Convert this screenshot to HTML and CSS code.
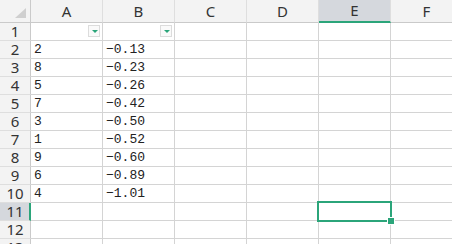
FILE: index.html
```html
<!DOCTYPE html>
<html lang="zh-CN">
<head>
    <meta charset="UTF-8">
    <title>Sheet1</title>
    <link rel="stylesheet" href="styles.css">
</head>
<body>
    <div class="sheet">
        <!-- 列标题 -->
        <div class="corner"><span class="corner-tri"></span></div>
        <div class="col-head">A</div>
        <div class="col-head">B</div>
        <div class="col-head">C</div>
        <div class="col-head">D</div>
        <div class="col-head active">E</div>
        <div class="col-head">F</div>

        <!-- 第1行 筛选 -->
        <div class="row-head">1</div>
        <div class="cell"><span class="filter"></span></div>
        <div class="cell"><span class="filter"></span></div>
        <div class="cell"></div><div class="cell"></div><div class="cell"></div><div class="cell"></div>

        <div class="row-head">2</div><div class="cell">2</div><div class="cell">−0.13</div>
        <div class="cell"></div><div class="cell"></div><div class="cell"></div><div class="cell"></div>

        <div class="row-head">3</div><div class="cell">8</div><div class="cell">−0.23</div>
        <div class="cell"></div><div class="cell"></div><div class="cell"></div><div class="cell"></div>

        <div class="row-head">4</div><div class="cell">5</div><div class="cell">−0.26</div>
        <div class="cell"></div><div class="cell"></div><div class="cell"></div><div class="cell"></div>

        <div class="row-head">5</div><div class="cell">7</div><div class="cell">−0.42</div>
        <div class="cell"></div><div class="cell"></div><div class="cell"></div><div class="cell"></div>

        <div class="row-head">6</div><div class="cell">3</div><div class="cell">−0.50</div>
        <div class="cell"></div><div class="cell"></div><div class="cell"></div><div class="cell"></div>

        <div class="row-head">7</div><div class="cell">1</div><div class="cell">−0.52</div>
        <div class="cell"></div><div class="cell"></div><div class="cell"></div><div class="cell"></div>

        <div class="row-head">8</div><div class="cell">9</div><div class="cell">−0.60</div>
        <div class="cell"></div><div class="cell"></div><div class="cell"></div><div class="cell"></div>

        <div class="row-head">9</div><div class="cell">6</div><div class="cell">−0.89</div>
        <div class="cell"></div><div class="cell"></div><div class="cell"></div><div class="cell"></div>

        <div class="row-head">10</div><div class="cell">4</div><div class="cell">−1.01</div>
        <div class="cell"></div><div class="cell"></div><div class="cell"></div><div class="cell"></div>

        <div class="row-head active">11</div>
        <div class="cell"></div><div class="cell"></div><div class="cell"></div><div class="cell"></div><div class="cell"></div><div class="cell"></div>

        <div class="row-head">12</div>
        <div class="cell"></div><div class="cell"></div><div class="cell"></div><div class="cell"></div><div class="cell"></div><div class="cell"></div>

        <div class="row-head">13</div>
        <div class="cell"></div><div class="cell"></div><div class="cell"></div><div class="cell"></div><div class="cell"></div><div class="cell"></div>

        <!-- 选中单元格 E11 -->
        <div class="selection"><span class="handle"></span></div>
    </div>
</body>
</html>
```

FILE: styles.css
```css
html, body {
    margin: 0;
    padding: 0;
    background: #fff;
    overflow: hidden;
}

.sheet {
    position: relative;
    display: grid;
    grid-template-columns: 31px repeat(6, 72px);
    grid-template-rows: 23px repeat(13, 18px);
    width: 463px;
}

.corner, .col-head, .row-head, .cell {
    box-sizing: border-box;
    border-right: 1px solid #d4d4d4;
    border-bottom: 1px solid #d4d4d4;
}

.corner {
    position: relative;
    background: #f3f3f3;
    border-color: #cacaca;
}

.corner-tri {
    position: absolute;
    right: 4px;
    bottom: 4px;
    width: 0;
    height: 0;
    border-left: 11px solid transparent;
    border-bottom: 10px solid #cfcfcf;
}

.col-head {
    background: #f3f3f3;
    border-bottom-color: #cacaca;
    border-right-color: #dedede;
    text-align: center;
    font-family: "Noto Sans", "DejaVu Sans", sans-serif;
    font-size: 15px;
    line-height: 22px;
    color: #333;
}

.col-head.active {
    background: #d5d8dd;
    border-bottom: 2px solid #2ba57a;
    line-height: 21px;
}

.row-head {
    background: #f3f3f3;
    border-right-color: #cacaca;
    border-bottom-color: #dedede;
    text-align: center;
    font-family: "Noto Sans", "DejaVu Sans", sans-serif;
    font-size: 15px;
    line-height: 17px;
    color: #333;
}

.row-head.active {
    background: #d5d8dd;
    border-right: 2px solid #2ba57a;
    padding-left: 1px;
}

.cell {
    position: relative;
    padding-left: 3px;
    font-family: "Liberation Mono", "DejaVu Sans Mono", monospace;
    font-size: 13px;
    line-height: 18px;
    color: #222;
    white-space: nowrap;
}

.filter {
    position: absolute;
    right: 2px;
    top: 2px;
    width: 12px;
    height: 12px;
    box-sizing: border-box;
    border: 1px solid #dcdcdc;
    background: #fafafa;
}

.filter::after {
    content: "";
    position: absolute;
    left: 3px;
    top: 4px;
    border-left: 3px solid transparent;
    border-right: 3px solid transparent;
    border-top: 3px solid #2ba57a;
}

.selection {
    position: absolute;
    left: 317px;
    top: 201px;
    width: 75px;
    height: 21px;
    box-sizing: border-box;
    border: 2px solid #2ba57a;
}

.handle {
    position: absolute;
    right: -5px;
    bottom: -5px;
    width: 6px;
    height: 6px;
    background: #2ba57a;
    border: 1px solid #fff;
}
```
